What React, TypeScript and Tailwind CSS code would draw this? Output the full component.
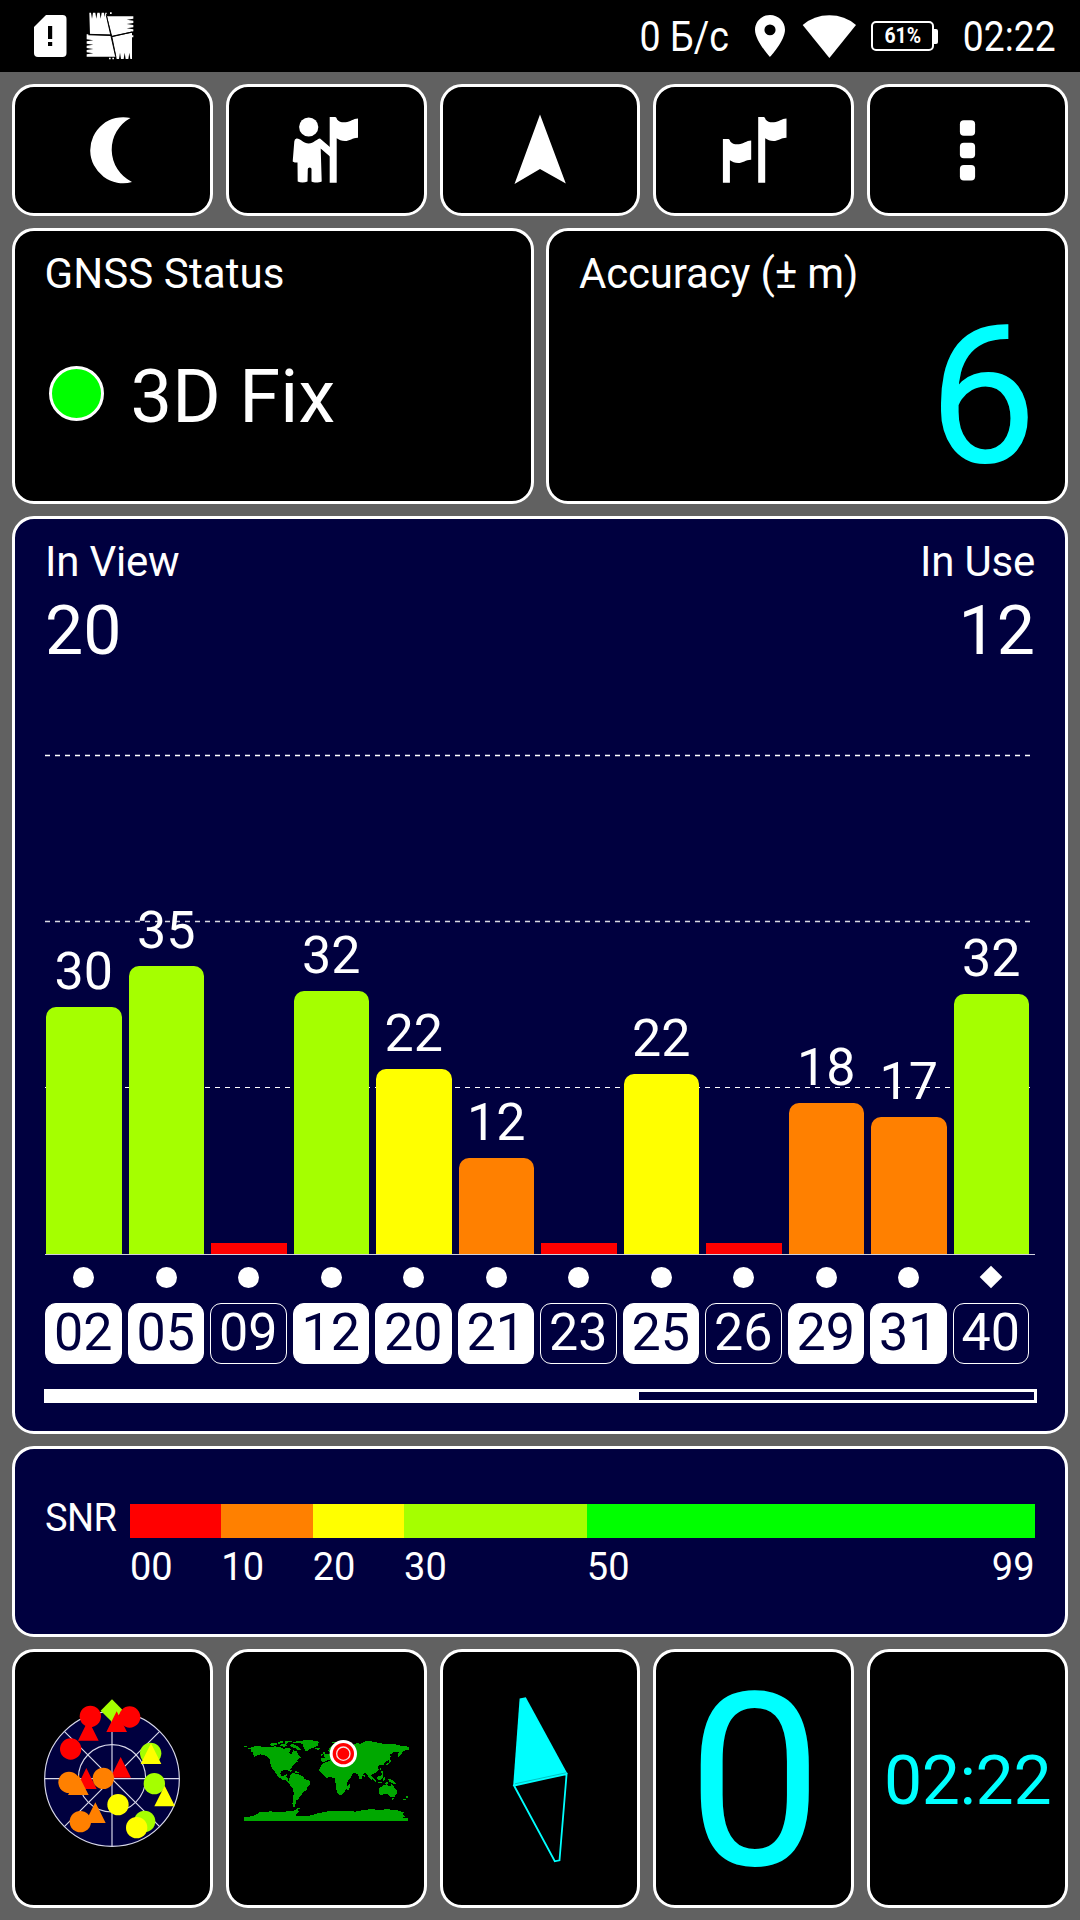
import type { ReactNode } from "react";

const LIME = "#a5ff00";
const YELLOW = "#ffff00";
const ORANGE = "#ff8000";
const RED = "#ff0000";

type Satellite = {
  id: string;
  snr?: number;
  height: number;
  color: string;
  used: boolean;
  shape?: "diamond";
};

const satellites: Satellite[] = [
  { id: "02", snr: 30, height: 246.5, color: LIME, used: true },
  { id: "05", snr: 35, height: 287.5, color: LIME, used: true },
  { id: "09", height: 11, color: RED, used: false },
  { id: "12", snr: 32, height: 262.5, color: LIME, used: true },
  { id: "20", snr: 22, height: 184.5, color: YELLOW, used: true },
  { id: "21", snr: 12, height: 95.5, color: ORANGE, used: true },
  { id: "23", height: 11, color: RED, used: false },
  { id: "25", snr: 22, height: 179.5, color: YELLOW, used: true },
  { id: "26", height: 11, color: RED, used: false },
  { id: "29", snr: 18, height: 150.5, color: ORANGE, used: true },
  { id: "31", snr: 17, height: 136.5, color: ORANGE, used: true },
  { id: "40", snr: 32, height: 259.5, color: LIME, used: false, shape: "diamond" },
];

const scale = [
  { label: "00", span: 10, color: RED },
  { label: "10", span: 10, color: ORANGE },
  { label: "20", span: 10, color: YELLOW },
  { label: "30", span: 20, color: LIME },
  { label: "50", span: 49, color: "#00ff00" },
];

function Card({ children, className = "bg-black" }: { children: ReactNode; className?: string }) {
  return <div className={`min-w-0 rounded-[22px] border-3 border-white ${className}`}>{children}</div>;
}

function ToolButton({ label, children, viewBox }: { label: string; children: ReactNode; viewBox: string }) {
  return (
    <Card className="bg-black flex items-center justify-center">
      <svg viewBox={viewBox} className="h-[80px] w-[100px]" fill="white" aria-label={label}>
        {children}
      </svg>
    </Card>
  );
}

function Flag() {
  return (
    <path d="M330.2 117h5.6q1.4 0 1.8 2.6c1.8 2.4 5 3 8.4 2.7c5-.5 7.5-3.6 12.500-3.800v19.200c-5-.2-8.500 3.300-13 3.300c-3.500 0-6-1.200-8.300-2.800v44.500h-7z" />
  );
}

function StatusBar() {
  return (
    <div className="flex h-[72px] items-center justify-between bg-black pl-[33px] pr-[24px]">
      <div className="flex items-center">
        <svg viewBox="33 12 35 48" className="h-[48px] w-[35px]">
          <path fill="white" d="M46 15H62.500Q66.500 15 66.500 19V53Q66.500 57 62.500 57H38Q34 57 34 53V27Z" />
          <path fill="black" d="M48 26h4.200v13H48zM48 42h4.200v4H48z" />
        </svg>
        <svg viewBox="0 0 180 180" className="ml-[12px] h-[60px] w-[60px]">
          <path
            fill="white"
            d="M28 20h5l3 18 3-18h7l3 18 3-18h7l3 18 3-18h7l2 13 2-13h4v4h-2l14 62-62-1z M90 19h5v5h-5z"
          />
          <path
            fill="white"
            d="M81 31h79v7l-20 3 20 3v7l-20 3 20 3v7l-20 3 20 3v6L96 89z"
          />
          <path
            fill="white"
            d="M20 85h5v3l68 2 14 62H20v-7l20-3-20-3v-7l20-3-20-3v-7l20-3-20-3v-7l20-3-20-3z"
          />
          <path
            fill="white"
            d="M97 92l59-12v79h-5l-3-19-3 19h-8l-3-19-3 19h-8l-3-19-3 19h-7l-2-12z M87 155h5v5h-5zM97 155h5v5h-5zM155 88h5v6h-5z"
          />
          <path stroke="black" strokeWidth="3" fill="none" d="M79 28l28 124M28 85l67 2M96 92l60-14" />
        </svg>
      </div>
      <div className="flex h-full items-center">
        <span className="mt-[2px] mr-[26px] origin-right scale-x-[0.895] text-[42px] leading-[42px]">0 Б/с</span>
        <svg viewBox="5 2 14 20" preserveAspectRatio="none" className="h-[42px] w-[30px]" fill="white">
          <path d="M12 2C8.130 2 5 5.130 5 9c0 5.250 7 13 7 13s7-7.750 7-13c0-3.870-3.130-7-7-7zm0 9.700a2.600 2.600 0 110-5.200 2.600 2.600 0 010 5.200z" />
        </svg>
        <svg viewBox="802 14 55 43" className="ml-[17.500px] h-[43px] w-[55px]" fill="white">
          <path d="M802.700 24Q814 14.300 829.400 14.300T856 24L829.400 57Z" />
        </svg>
        <div className="ml-[14px] flex items-center">
          <div className="flex h-[30px] w-[63px] items-center justify-center rounded-[5px] border-2 border-white">
            <span className="scale-x-[0.88] text-[22px] leading-[26px] font-bold">61%</span>
          </div>
          <div className="h-[15px] w-[4px] rounded-r-[2px] bg-white" />
        </div>
        <span className="mt-[2px] ml-[13px] origin-right scale-x-[0.887] text-[42px] leading-[42px]">02:22</span>
      </div>
    </div>
  );
}

function RadarIcon() {
  return (
    <svg viewBox="0 0 510 510" className="h-[170px] w-[170px]">
      <circle cx="249" cy="267" r="202" fill="#00003f" />
      <g fill="none" stroke="#d8d8ea" strokeWidth="3.500">
        <circle cx="249" cy="267" r="202" />
        <circle cx="249" cy="265" r="101" />
        <path d="M249 65v404M47 266h404M106 124l286 286M392 124L106 410" />
      </g>
      <path fill={LIME} d="M249 28l34 34-34 34-34-34z" />
      <g fill={RED}>
        <circle cx="184" cy="79" r="32" />
        <circle cx="302" cy="81" r="32" />
        <circle cx="125" cy="177" r="32" />
        <path d="M263 64l31 62h-62zM178 90l31 62h-62zM172 234l31 63h-62zM275 201l31 62h-62z" />
      </g>
      <circle cx="365" cy="190" r="32" fill={LIME} />
      <circle cx="376" cy="281" r="32" fill={LIME} />
      <circle cx="347" cy="394" r="32" fill={LIME} />
      <g fill={YELLOW}>
        <path d="M366 160l31 62h-62zM407 287l31 62h-62z" />
        <circle cx="323" cy="413" r="32" />
        <circle cx="267" cy="344" r="32" />
      </g>
      <g fill={ORANGE}>
        <circle cx="223" cy="265" r="32" />
        <circle cx="120" cy="277" r="32" />
        <path d="M148 254l31 61h-62zM199 337l31 62h-62z" />
        <circle cx="154" cy="395" r="32" />
      </g>
    </svg>
  );
}

function WorldMapIcon() {
  return (
    <svg viewBox="0 0 570 360" className="h-[120px] w-[190px]">
      <g fill="#00a800" shapeRendering="crispEdges">
        <path d="M63 82l14-4 20 2 24 1 14-2 17 3 9 5 12-4 9 5-4 10 6 5 5-12 12 4 4 8 8 9-8 5-5 5 5 2-9 4-4 7-8 7-5 9-2 6-2-5-9-2-11 2-4 7 2 7 6 3 5-5 7-1-3 9 6 2 1 7 4 6 7 2 3 2-5 1-8-4-9-7-12-3-11-8-6-9-5-9-7-8-5-13-2-12-10-10-11-5-8-1-9 4-12 6 5-6-7-4 3-6-6-2z" />
        <path d="M41 78h10v3H41zM55 83h8v3h-8zM120 71l14-3 10 4-5 4-16 1zM143 66l12-3 6 3-6 4-12 1zM164 62h22v3h-14l3 5-10 1zM152 74l10-3 9 5-8 4-12-2zM178 74l12-1 12 6 10 10-8 3-4-6-10-2-6-4zM171 84l8 1 2 5-7 1z" />
        <path d="M187 67l20-4 22-3 28 2 12 4-7 5 2 6-10 5-14 5-9 8-5-3-5-9-2-9-12-6-12 2zM256 83l14 1-3 5-11-1z" />
        <path d="M169 149l10-1 10 5-7 2zM191 155l10-1 6 4-8 2zM182 139h5v4h-5z" />
        <path d="M180 166l8-6 12 1 10 4 8 3 5 8 10 4 9 5-4 11-6 6-3 9-9 5-6 9-6 7-4 6-5 2-1 9-3 6 1 6-6-1-3-8 2-14 2-17-1-13-8-9-6-11 2-13z" />
        <path d="M267 151l6-13 9-10 14-4 13 0 2 6 10 3 8-3 13 2 4 11 7 12 8 4 9-1-7 13-9 11-3 8 2 9-6 9-3 7-6 8-10 2-5-5-4-13 0-12-3-9-3-13-12-1-11 1-10-7z" />
        <path d="M355 196l4-3 1 6-4 10-6 1-1-6z" />
        <path d="M273 114l11-1 4-9 9-3 6 3 0 14 7 7-8-3-9-3-5 5-10 2-6-3zM278 99l5-3 5 7 2 6-9 2 1-7zM274 101l4 0-1 6-5 1zM294 93l6-11 10-9 13-5 10 2 8 5-7 9-9 11-10 7-10-2zM303 68l10-3 6 2-8 3z" />
        <path d="M325 82l23-9 20 3 12-6 13 1 10-6 14-2 20 4 20 4 24 2 12-1 12 4 22 2 11 3v8l-12 2-8 4-5 9-7 8-2-10 5-7-16 1-12 7 1 8-7 10-10 5-3 8-6 2-8-1-4 7 2 8-8 9-10 3-4 5 5 8-4 6-6-5-5-9-4-6-7-1-6 8-2 8-5 3-8-17-8-3-12-1-5 4 2 7-11 6-6-9-7-9-4-7-6-5-8 4-12-8-3-13z" />
        <path d="M401 164l4 4-2 3-3-3zM479 116l4 8-4 6-8 5-3-2 8-5zM455 151l4 5-2 7-4-4zM419 166l12 7 6 9 3 5-6-3-8-9zM441 185l12 1 4 3-13 0zM443 170l8-3 7-4 1 8-6 8-9 1-4-5zM458 174l6-2 2 6-4 5-4-3zM475 176l13 4 8 7 2 5-9-1-13-7zM465 188h9v3h-9z" />
        <path d="M447 205l9-5 7-6 8-1 4 4 6 2 4-9 4 7 5 8 7 7-1 9-6 9-8 3-8-5-6-5-9-1-10 3-7-3z" />
        <path d="M485 234l7 0-3 5-4-1zM530 227l5 3-3 6-4-2zM520 238l8-3-1 5-6 2zM449 145l4-2 2 4-4 5zM469 187h5v6h-5z" />
        <path d="M41 291l26-2 9-4 13-8 21-1 10-2 23 2 18 0 12-3 13 1 9-4 10-6 8-1-10 7 5 5-7 7-5 4 10 2 16 1 11-1 14-3 17-6 10-1 12-3 20-2 28-1 23 1 20 2 19-4 23-3 33 1 22-1 25 2 10 4 15 3-7 6 7 7-9 2 19 3v7H41z" />
      </g>
      <circle cx="340" cy="101" r="41" fill="white" />
      <circle cx="340" cy="101" r="32" fill={RED} />
      <circle cx="340" cy="101" r="20" fill="none" stroke="#f4e4e4" strokeWidth="4" />
    </svg>
  );
}

function CompassIcon() {
  return (
    <svg viewBox="500 1688 80 180" className="h-[180px] w-[80px]">
      <path fill="#00ffff" d="M519.600 1697.600L525.800 1696.300L567.500 1772.700L513.200 1784.500Z" />
      <path
        fill="none"
        stroke="#00ffff"
        strokeWidth="1.800"
        d="M514 1784.500L566.600 1773L559.500 1859.300L554.800 1860.300Z"
      />
      <path stroke="#009a9a" strokeWidth=".6" d="M515 1782.800L566 1771.800" />
    </svg>
  );
}

function SatelliteChart() {
  return (
    <div className="relative">
      <svg className="absolute top-0 left-0 h-[590px] w-[990px]" viewBox="45 665 990 590" stroke="white">
        <path strokeWidth="1.300" strokeDasharray="5 5" d="M45 755.500H1030" />
        <path strokeWidth="1.600" strokeDasharray="5 5" stroke="#d9d9e4" d="M45 921.500H1030" />
        <path strokeWidth="1" strokeDasharray="5 5" d="M45 1087.500H1030" />
      </svg>
      <div className="relative flex h-[590px] items-end gap-[7px] border-b-[1.5px] border-[#d0d0dc] pl-px">
        {satellites.map((s) => (
          <div key={s.id} className="flex w-[75.5px] shrink-0 flex-col items-center">
            {s.snr !== undefined && (
              <span className="mb-[9.500px] text-[52px] leading-[52px]">{s.snr}</span>
            )}
            <div
              className={s.snr !== undefined ? "w-full rounded-t-[10px]" : "w-full"}
              style={{ height: s.height, backgroundColor: s.color }}
            />
          </div>
        ))}
      </div>
      <div className="mt-[10.500px] flex h-[24px] items-center gap-[7px] pl-px">
        {satellites.map((s) => (
          <div key={s.id} className="flex w-[75.5px] shrink-0 justify-center">
            {s.shape === "diamond" ? (
              <div className="size-[16px] rotate-45 bg-white" />
            ) : (
              <div className="size-[21px] rounded-full bg-white" />
            )}
          </div>
        ))}
      </div>
      <div className="mt-[13.500px] flex gap-[6px]">
        {satellites.map((s) => (
          <div
            key={s.id}
            className={
              "flex h-[61px] w-[76.5px] shrink-0 items-center justify-center rounded-[11px] border-[1.5px] border-white text-[52px] leading-[60px] " +
              (s.used ? "bg-white text-[#00003f]" : "text-white")
            }
          >
            {s.id}
          </div>
        ))}
      </div>
      <div className="-mr-[2px] -ml-px mt-[25.500px] h-[14px] border-3 border-white">
        <div className="h-full w-[60%] bg-white" />
      </div>
    </div>
  );
}

export default function App() {
  return (
    <div className="flex h-[1920px] w-[1080px] flex-col overflow-hidden bg-[#616161] font-['Roboto',sans-serif] text-white">
      <StatusBar />
      <div className="flex flex-1 flex-col gap-3 p-3">
        <div className="grid h-[132px] grid-cols-5 gap-[13px]">
          <ToolButton label="Night mode" viewBox="63 110 100 80">
            <path d="M131.500 118A33 33 0 1 0 133 182A36 36 0 0 1 131.500 118Z" />
          </ToolButton>
          <ToolButton label="Guide" viewBox="276.500 110 100 80">
            <circle cx="309.200" cy="127" r="9.600" />
            <path d="M297 138.500c3.500-.4 7 5 12.200 5c5 0 8-4.700 11.300-5l10.500 9v9.500l-9.800-8.500l1 33c-3 1.400-8 1.400-10.200 0v-12.500q0-1.500-1.800-1.500t-1.900 1.500l-.3 12.500c-3 1.400-7 1.400-9.800 0l-.2-19c-1.500 0-4 0-4.800-1l1.600-20q.2-2.700 2.200-3z" />
            <Flag />
          </ToolButton>
          <ToolButton label="Navigate" viewBox="490 110 100 80">
            <path d="M540 114.500L565.800 183.500L540 169L514.500 184Z" />
          </ToolButton>
          <ToolButton label="Route" viewBox="704 110 100 80">
            <g transform="translate(428 0)">
              <Flag />
            </g>
            <path
              transform="translate(392.700 22)"
              d="M330.200 117h5.600q1.400 0 1.800 2.600c1.800 2.400 5 3 8.400 2.700c5-.5 7.500-3.600 12.500-3.800v19.200c-5-.2-8.500 3.300-13 3.300c-3.500 0-6-1.200-8.300-2.800v22.500h-7z"
            />
          </ToolButton>
          <ToolButton label="Menu" viewBox="917.500 110 100 80">
            <rect x="959.400" y="120.300" width="15.200" height="15.500" rx="4" />
            <rect x="959.400" y="142.800" width="15.200" height="15.500" rx="4" />
            <rect x="959.400" y="165" width="15.200" height="15.500" rx="4" />
          </ToolButton>
        </div>

        <div className="grid h-[275.5px] grid-cols-2 gap-3">
          <Card className="bg-black px-[29.500px] pt-[22px]">
            <div className="text-[42px] leading-[42px] tracking-[0.1px]">GNSS Status</div>
            <div className="mt-[64.500px] flex items-center pl-[4px]">
              <div className="-mt-[6px] size-[55px] rounded-full border-3 border-white bg-[#00ff00]" />
              <div className="ml-[27px] text-[74px] leading-[74px] tracking-[0.1px]">3D Fix</div>
            </div>
          </Card>
          <Card className="bg-black flex flex-col pr-[28px] pl-[30px] pt-[22px]">
            <div className="text-[42px] leading-[42px] tracking-[-0.18px]">Accuracy (± m)</div>
            <div className="mt-[5px] text-right text-[193px] leading-[193px] text-[#00ffff]">6</div>
          </Card>
        </div>

        <Card className="h-[918.5px] shrink-0 bg-[#00003f] px-[30px] pt-[22px]">
          <div className="flex justify-between text-[42px] leading-[42px] tracking-[-0.2px]">
            <span>In View</span>
            <span>In Use</span>
          </div>
          <div className="mt-[14px] flex justify-between text-[68px] leading-[68px]">
            <span>20</span>
            <span>12</span>
          </div>
          <SatelliteChart />
        </Card>

        <Card className="flex h-[191px] shrink-0 bg-[#00003f] pr-[30.500px] pl-[30px]">
          <div className="w-[85px] shrink-0 pt-[49.500px] text-[38px] leading-[38px] tracking-[-0.6px]">SNR</div>
          <div className="flex-1 pt-[54.500px]">
            <div className="flex h-[34px]">
              {scale.map((s) => (
                <div key={s.label} style={{ flexGrow: s.span, flexBasis: 0, backgroundColor: s.color }} />
              ))}
            </div>
            <div className="flex pt-[10px] text-[38px] leading-[38px]">
              {scale.map((s) => (
                <div key={s.label} className="flex min-w-0 justify-between" style={{ flexGrow: s.span, flexBasis: 0 }}>
                  <span>{s.label}</span>
                  {s.label === "50" && <span>99</span>}
                </div>
              ))}
            </div>
          </div>
        </Card>

        <div className="grid h-[259px] shrink-0 grid-cols-5 gap-[13px]">
          <Card className="bg-black flex items-center justify-center">
            <div className="-mt-[7px] ml-[4px] shrink-0">
              <RadarIcon />
            </div>
          </Card>
          <Card className="bg-black flex items-center justify-center">
            <div className="mt-[2px] mr-[2px] shrink-0">
              <WorldMapIcon />
            </div>
          </Card>
          <Card className="bg-black flex items-center justify-center">
            <CompassIcon />
          </Card>
          <Card className="bg-black pt-[11px] pl-[2px] text-center text-[240.500px] leading-[240.500px] text-[#00ffff]">
            0
          </Card>
          <Card className="bg-black pt-[95px] text-center text-[68px] leading-[68px] tracking-[-0.4px] whitespace-nowrap text-[#00ffff]">
            02:22
          </Card>
        </div>
      </div>
    </div>
  );
}
